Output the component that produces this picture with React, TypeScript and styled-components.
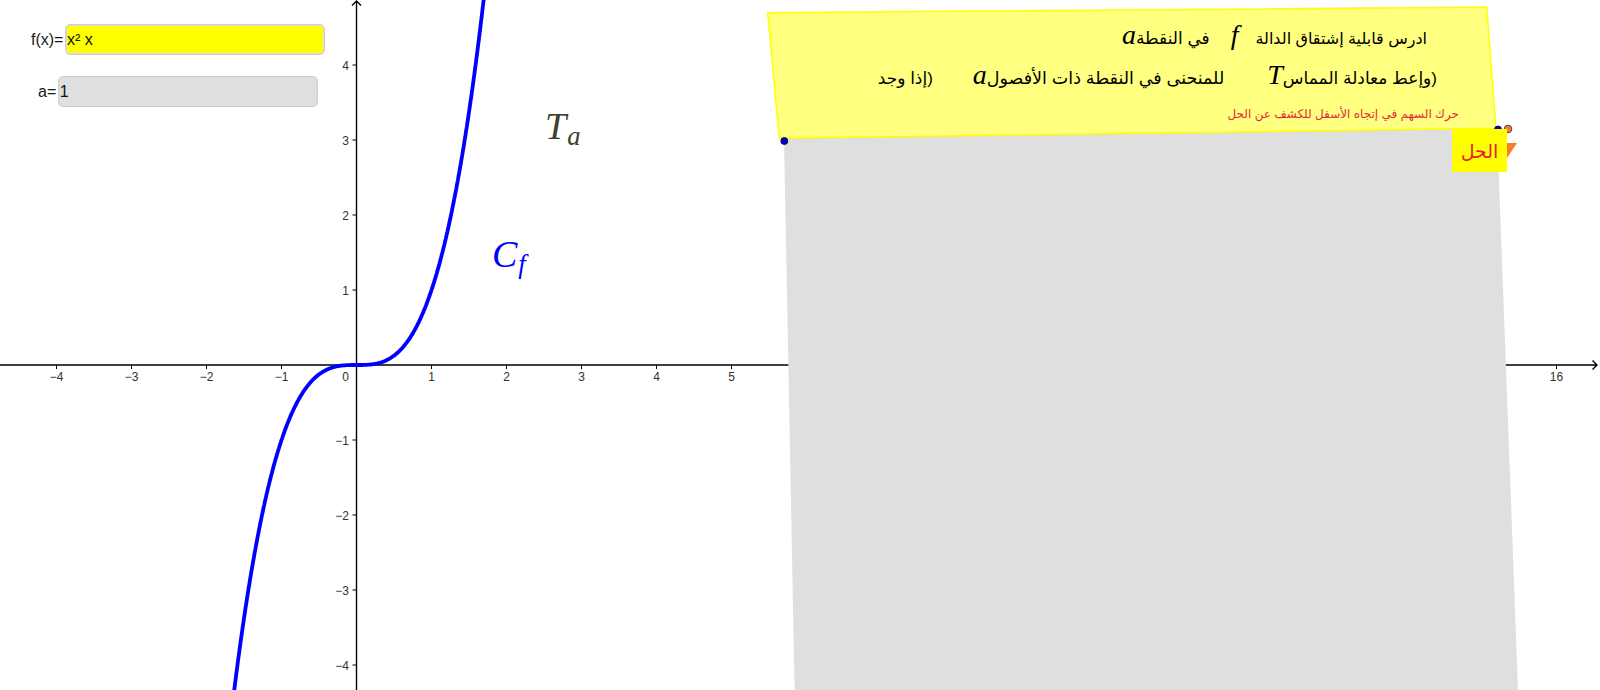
import React from "react";
import styled, { createGlobalStyle } from "styled-components";

const UNIT = 75;
const ORIGIN_X = 356.5;
const ORIGIN_Y = 365;
const px = (x: number) => ORIGIN_X + x * UNIT;
const py = (y: number) => ORIGIN_Y - y * UNIT;

const GlobalStyle = createGlobalStyle`
  html, body {
    margin: 0;
    padding: 0;
    background: #fff;
    overflow: hidden;
  }
`;

const Stage = styled.div`
  position: relative;
  width: 1600px;
  height: 690px;
  overflow: hidden;
  background: #fff;
  font-family: "Liberation Sans", Arial, sans-serif;
`;

const Board = styled.svg`
  position: absolute;
  inset: 0;
  display: block;
`;

const TickLabel = styled.text`
  font-family: "Liberation Sans", Arial, sans-serif;
  font-size: 12px;
  fill: #33332a;
`;

const Controls = styled.div`
  position: absolute;
  left: 0;
  top: 24px;
  display: flex;
  flex-direction: column;
  gap: 21px;
`;

const InputRow = styled.label<{ $indent: number }>`
  display: flex;
  align-items: center;
  gap: 1.5px;
  padding-left: ${(p) => p.$indent}px;
  font-size: 16px;
  color: #1a1a1a;
`;

const InputBox = styled.div<{ $bg: string }>`
  box-sizing: border-box;
  width: 260px;
  height: 31px;
  padding: 0 1px;
  display: flex;
  align-items: center;
  background: ${(p) => p.$bg};
  border: 1px solid #cfcfcf;
  border-radius: 5px;
  box-shadow: 0 0 0 1px #dcdcdc inset;
  color: #111;
`;

const CurveLabel = styled.span<{ $x: number; $y: number; $color: string }>`
  position: absolute;
  left: ${(p) => p.$x}px;
  top: ${(p) => p.$y}px;
  font-family: "Liberation Serif", "Times New Roman", serif;
  font-style: italic;
  font-size: 38px;
  line-height: 1;
  color: ${(p) => p.$color};
  white-space: nowrap;
`;

const Sub = styled.sub`
  font-size: 0.7em;
  vertical-align: -0.22em;
  margin-left: 1px;
`;

const Note = styled.div`
  position: absolute;
  left: 767px;
  top: 25px;
  width: 719px;
  display: flex;
  flex-direction: column;
  gap: 19.5px;
  direction: rtl;
`;

const NoteLine = styled.div<{ $inset: number; $color?: string }>`
  display: flex;
  align-items: baseline;
  height: 20px;
  padding-right: ${(p) => p.$inset}px;
  color: ${(p) => p.$color ?? "#000"};
  font-family: "Liberation Sans", "DejaVu Sans", sans-serif;
  white-space: nowrap;
`;

const Segment = styled.span<{ $size: number }>`
  font-size: ${(p) => p.$size}px;
  line-height: 20px;
`;

const NoteMath = styled.span<{ $size: number; $before: number; $after: number }>`
  font-family: "Liberation Serif", "Times New Roman", serif;
  font-style: italic;
  font-size: ${(p) => p.$size}px;
  line-height: 20px;
  margin-right: ${(p) => p.$before}px;
  margin-left: ${(p) => p.$after}px;
`;

const SolutionButton = styled.div`
  position: absolute;
  left: 1452px;
  top: 129px;
  width: 55px;
  height: 43px;
  padding-top: 2px;
  box-sizing: border-box;
  display: flex;
  align-items: center;
  justify-content: center;
  background: #ffff00;
  color: #e6202e;
  font-family: "Liberation Sans", "DejaVu Sans", sans-serif;
  font-size: 19px;
  direction: rtl;
`;

const xTicks = [-4, -3, -2, -1, 1, 2, 3, 4, 5, 16];
const yTicks = [-4, -3, -2, -1, 1, 2, 3, 4];

const minus = (n: number) => (n < 0 ? `\u2212${-n}` : `${n}`);

function curvePath() {
  const pts: string[] = [];
  for (let x = -1.75; x <= 1.75; x += 0.01) {
    pts.push(`${px(x).toFixed(1)},${py(x * x * x).toFixed(1)}`);
  }
  return "M" + pts.join("L");
}

function Graph() {
  return (
    <Board width={1600} height={690} viewBox="0 0 1600 690">
      <g stroke="#000" strokeWidth={1.4} fill="none">
        <path d={`M0 ${ORIGIN_Y}H1597M1592.5 ${ORIGIN_Y - 4.5}L1597 ${ORIGIN_Y}L1592.5 ${ORIGIN_Y + 4.5}`} />
        <path d={`M${ORIGIN_X} 690V1M${ORIGIN_X - 4.5} 5.5L${ORIGIN_X} 1L${ORIGIN_X + 4.5} 5.5`} />
        {xTicks.map((t) => (
          <path key={t} d={`M${px(t)} ${ORIGIN_Y}v4`} strokeWidth={1} />
        ))}
        {yTicks.map((t) => (
          <path key={t} d={`M${ORIGIN_X} ${py(t)}h-4`} strokeWidth={1} />
        ))}
      </g>
      {xTicks.map((t) => (
        <TickLabel key={t} x={px(t)} y={380.5} textAnchor="middle">
          {minus(t)}
        </TickLabel>
      ))}
      <TickLabel x={349} y={380.5} textAnchor="end">0</TickLabel>
      {yTicks.map((t) => (
        <TickLabel key={t} x={349} y={py(t) + 5} textAnchor="end">
          {minus(t)}
        </TickLabel>
      ))}
      <path d={curvePath()} fill="none" stroke="#0000ff" strokeWidth={3.8} />
      <polygon points="784,138 1497,127.5 1518,690 794.6,690" fill="#dfdfdf" />
      <path d="M1265 8.5L1487 6.8" stroke="#e8e8e8" strokeWidth={1} />
      <polygon
        points="767.7,12.7 1486.7,7.3 1496,128.3 779.3,138.3"
        fill="#ffff80"
        stroke="#ffff00"
        strokeWidth={1.5}
      />
      <circle cx={784.3} cy={141} r={3.5} fill="#0000c8" stroke="#003" strokeWidth={0.8} />
      <circle cx={1498} cy={129.5} r={3.5} fill="#0000c8" stroke="#003" strokeWidth={0.8} />
      <polygon points="1505,143 1517,143 1507,158" fill="#f97c2c" />
      <circle cx={1508} cy={129} r={3.8} fill="#f97c2c" stroke="#444" strokeWidth={1} />
    </Board>
  );
}

export default function App() {
  return (
    <Stage>
      <GlobalStyle />
      <Graph />
      <Controls>
        <InputRow $indent={31}>
          f(x)=
          <InputBox $bg="#ffff00">x² x</InputBox>
        </InputRow>
        <InputRow $indent={38}>
          a=
          <InputBox $bg="#dfdfdf">1</InputBox>
        </InputRow>
      </Controls>
      <CurveLabel $x={545} $y={107} $color="#3f4326">
        T<Sub>a</Sub>
      </CurveLabel>
      <CurveLabel $x={492} $y={235} $color="#0000ff">
        C<Sub>f</Sub>
      </CurveLabel>
      <Note>
        <NoteLine $inset={59}>
          <Segment $size={16}>ادرس قابلية إشتقاق الدالة</Segment>
          <NoteMath $size={28} $before={17} $after={21}>f</NoteMath>
          <Segment $size={17}>في النقطة</Segment>
          <NoteMath $size={28} $before={0} $after={0}>a</NoteMath>
        </NoteLine>
        <NoteLine $inset={49}>
          <Segment $size={17}>(وإعط معادلة المماس</Segment>
          <NoteMath $size={28} $before={0} $after={43}>T</NoteMath>
          <Segment $size={17.5}>للمنحنى في النقطة ذات الأفصول</Segment>
          <NoteMath $size={28} $before={0} $after={40}>a</NoteMath>
          <Segment $size={17}>(إذا وجد</Segment>
        </NoteLine>
        <NoteLine $inset={27} $color="#e6283c">
          <Segment $size={12}>حرك السهم في إتجاه الأسفل للكشف عن الحل</Segment>
        </NoteLine>
      </Note>
      <SolutionButton>الحل</SolutionButton>
    </Stage>
  );
}
